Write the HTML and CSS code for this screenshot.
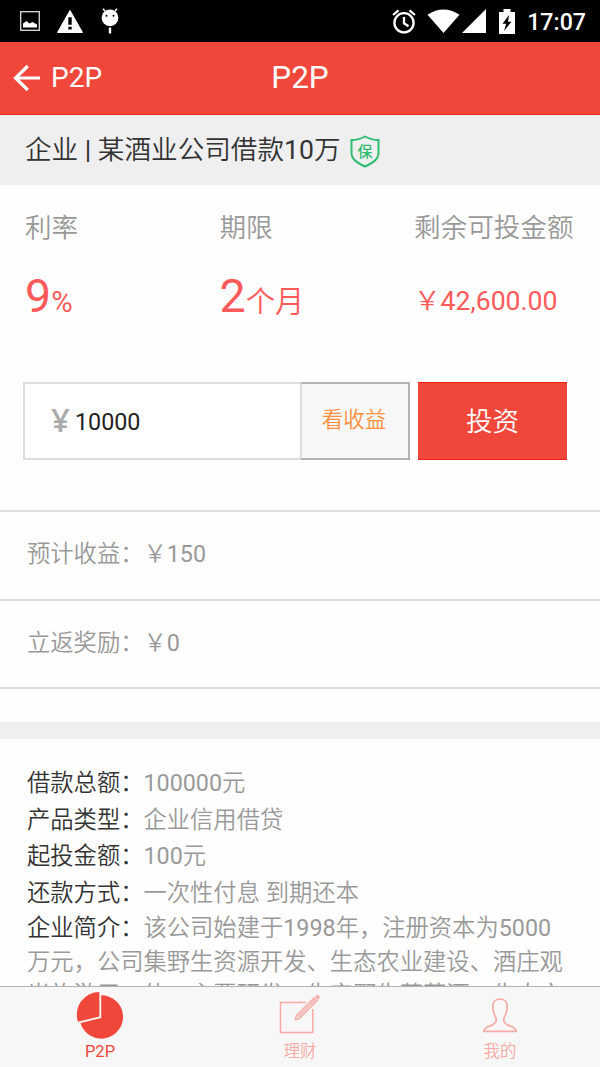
FILE: index.html
```
<!DOCTYPE html>
<html lang="zh-CN">
<head>
<meta charset="utf-8">
<title>P2P</title>
<link rel="stylesheet" href="styles.css">
</head>
<body>
<div class="app">
  <div class="status">
    <div class="status-left">
      <svg width="20" height="20" viewBox="0 0 20 20"><rect x=".7" y=".7" width="18.600" height="18.600" fill="none" stroke="#ddd" stroke-width="1.300"/><path d="M3 16.500v-4l3.500-2.500 3 2.500 3-1.500 4.500 2.500v3z" fill="#fff"/></svg>
      <svg width="26" height="23" viewBox="0 0 26 23"><path d="M13 .5 25.500 22.500H.5z" fill="#fff" stroke="#fff" stroke-linejoin="round"/><path d="M11.300 7.300h3.400v7.500h-3.400zM11.300 16.800h3.400v2.700h-3.400z" fill="#000"/></svg>
      <svg width="18" height="26" viewBox="0 0 18 26"><circle cx="9" cy="9.800" r="8.400" fill="#fff"/><path d="M4 3 2 .7M14 3 16 .7" stroke="#fff" stroke-width="1.500"/><path d="M9 19.500v6" stroke="#fff" stroke-width="2.400"/><circle cx="5.500" cy="7.800" r="1"/><circle cx="12.500" cy="7.800" r="1"/></svg>
    </div>
    <div class="status-right">
      <svg width="24" height="25" viewBox="0 0 24 25"><g fill="none" stroke="#fff" stroke-width="2.300"><circle cx="12" cy="13.800" r="9.600"/><path d="M12 8v6.300l4.500 3M1 6 6.500 1.300M23 6 17.500 1.300"/></g></svg>
      <svg width="33" height="24" viewBox="0 0 33 24"><path d="M.5 5.800Q16.500-5 32.500 5.800L16.500 24z" fill="#fff"/></svg>
      <svg class="signal" width="24" height="24" viewBox="0 0 24 24"><path d="M24 0v24H0z" fill="#fff"/></svg>
      <svg class="battery" width="16" height="25" viewBox="0 0 16 25"><path d="M4.500 0h7v3H16v22H0V3h4.500z" fill="#fff"/><path d="M10 6 3.500 14.800h3.700L5 22l7.500-9.300H9z"/></svg>
      <span class="clock">17:07</span>
    </div>
  </div>

  <header class="nav">
    <a class="back"><svg width="28" height="28" viewBox="0 0 28 28"><path d="M27 14H3M14.800 2 2.500 14l12.300 12" fill="none" stroke="#fff" stroke-width="3.200"/></svg><span>P2P</span></a>
    <h1 class="nav-title">P2P</h1>
    <span></span>
  </header>

  <main class="content">
    <div class="loan-title"><span>企业 | 某酒业公司借款10万</span>
      <svg width="30" height="33" viewBox="0 0 30 33"><path d="M15 1.500C10.500 4 6 5 1.500 5v13c0 6.500 6 10 13.500 13.500C22.500 28 28.500 24.500 28.500 18V5C24 5 19.500 4 15 1.500z" fill="none" stroke="#2fbd72" stroke-width="2"/><text class="badge-text" x="15" y="21.500">保</text></svg>
    </div>

    <section class="stats">
      <div class="stat"><div class="label">利率</div><div class="value"><span class="big">9</span><span class="percent">%</span></div></div>
      <div class="stat"><div class="label">期限</div><div class="value"><span class="big">2</span><span class="unit">个月</span></div></div>
      <div class="stat"><div class="label">剩余可投金额</div><div class="value money">￥42,600.00</div></div>
    </section>

    <section class="invest">
      <div class="amount"><span class="yen">¥</span><span class="amount-value">10000</span></div>
      <button class="calc">看收益</button>
      <button class="buy">投资</button>
    </section>

    <section class="returns">
      <div class="return-row">预计收益：<span class="sum">￥150</span></div>
      <div class="return-row">立返奖励：<span class="sum">￥0</span></div>
    </section>

    <div class="divider"></div>

    <section class="details">
      <p><b>借款总额：</b>100000元</p>
      <p><b>产品类型：</b>企业信用借贷</p>
      <p><b>起投金额：</b>100元</p>
      <p><b>还款方式：</b>一次性付息 到期还本</p>
      <p class="intro"><b>企业简介：</b>该公司始建于1998年，注册资本为5000<br>万元，公司集野生资源开发、生态农业建设、酒庄观<br>光旅游于一体，主要研发、生产野生葡萄酒、生态文</p>
    </section>
  </main>

  <nav class="tabs">
    <a class="tab active"><svg width="48" height="48" viewBox="0 0 48 48"><path d="M25.200 4.200A21.700 21.700 0 1 1 4.500 32L25.200 27z" fill="#f1473a"/><path d="M23.400 1V25.500L2 30.700A22.500 22.500 0 0 1 23.400 1z" fill="#f1473a"/></svg><span>P2P</span></a>
    <a class="tab"><svg width="48" height="48" viewBox="0 0 48 48"><g fill="none" stroke="#f8aaa4" stroke-width="1.500"><path d="M30 11.500H4.500V41.500H36.800V18"/><path d="M19.500 28.500 20.300 24.500 38.200 6.800 41 9.700 23.200 27.500zM22 25.700 39.500 8.300"/><path d="M40.300 5.500 41.500 4.600 43 6.200 42 7.500z"/></g></svg><span>理财</span></a>
    <a class="tab"><svg width="48" height="48" viewBox="0 0 48 48"><path d="M7.800 40.400c0-6.400 12.500-4.500 12.500-11.500 0-3-3.300-6.500-3.300-11.200V14c0-3.500 2.800-5.800 7-5.800s7 2.300 7 5.800v3.700c0 4.700-3.300 8.200-3.300 11.200 0 7 12.500 5.100 12.500 11.500z" fill="none" stroke="#f8aaa4" stroke-width="1.700"/></svg><span>我的</span></a>
  </nav>
</div>
</body>
</html>
```
FILE: styles.css
```
* { box-sizing: border-box; }
body { margin: 0; font-family: Roboto, "Noto Sans CJK SC DemiLight", "Noto Sans CJK SC", sans-serif; background: #fefefe; color: #333; }
svg { display: block; flex: none; }
.app { width: 600px; height: 1067px; display: flex; flex-direction: column; overflow: hidden; }

.status { height: 42px; flex: none; background: #000; color: #fff; display: flex; justify-content: space-between; padding: 0 14px 0 20px; }
.status-left, .status-right { display: flex; align-items: center; }
.status-left { gap: 17px; }
.status-left svg:nth-child(3) { margin-left: 1px; }
.status-right svg:first-child { margin-right: 11px; }
.signal { margin-left: 2px; }
.battery { margin: 0 12px 0 13px; }
.clock { font-size: 23.200px; font-weight: 500; line-height: 42px; padding-top: 1px; }

.nav { height: 73px; flex: none; background: #f1473a; border-bottom: 1px solid #ef2a1b; color: #fff; display: grid; grid-template-columns: 1fr auto 1fr; align-items: center; }
.back { display: flex; align-items: center; gap: 10px; padding-left: 13px; font-size: 28px; }
.back svg { margin-top: -1px; }
.back span { margin-top: -2px; }
.nav-title { margin: -2px 0 0; font-size: 31.500px; font-weight: 400; }

.content { flex: 1; min-height: 0; overflow: hidden; }
.loan-title { height: 70px; background: #efefef; display: flex; align-items: center; gap: 9px; padding-left: 25px; font-size: 26.600px; white-space: nowrap; }
.loan-title span { line-height: 40px; }
.loan-title svg { margin-top: 2px; }
.badge-text { font: 500 15px "Noto Sans CJK SC", sans-serif; fill: #2fbd72; text-anchor: middle; }

.stats { display: grid; grid-template-columns: 194.500px 194.500px 1fr; padding: 23px 0 0 25px; height: 197px; }
.label { font-size: 26.600px; line-height: 40px; color: #999; white-space: nowrap; }
.value { color: #ff5a5a; height: 60px; line-height: 60px; margin-top: 18px; white-space: nowrap; }
.big { font-size: 46.500px; }
.percent { font-size: 29.300px; }
.unit { font-size: 29.300px; }
.money { font-size: 26.600px; padding-top: 5px; }

.invest { display: flex; height: 78px; padding-left: 23px; }
.amount { width: 277px; border: 2px solid #ddd; border-right: 0; display: flex; align-items: center; padding-left: 26px; font-size: 23.300px; color: #222; background: #fff; }
.amount-value { padding-top: 1px; }
.yen { width: 24px; font: 600 33px/40px "Open Sans", sans-serif; color: #aaa; margin-top: -2px; }
button { font-family: inherit; padding: 0; border-radius: 0; }
.calc { width: 110px; background: #f7f7f7; border: 2px solid #b2b2b2; border-left-color: #ddd; color: #ff8f3c; font-size: 21.500px; padding: 0 2px 7px 0; }
.buy { width: 149px; margin-left: 8px; background: #f1473a; border: 0 solid #ec2213; border-width: 1px 0; color: #fff; font-size: 26.600px; padding-bottom: 4px; }

.returns { margin-top: 50px; border-top: 2px solid #ddd; color: #999; font-size: 23.300px; }
.return-row { height: 88.500px; border-bottom: 2px solid #ddd; line-height: 84px; padding-left: 27px; }
.divider { margin-top: 33px; height: 17px; background: #efefef; }

.details { padding: 26px 0 0 27px; font-size: 23.300px; color: #999; white-space: nowrap; }
.details p { margin: 0; line-height: 36.600px; }
.details b { font-weight: 400; color: #333; }
.details .intro { line-height: 33.300px; margin-top: 1px; }

.tabs { height: 81px; flex: none; background: #f7f7f7; border-top: 1px solid #b2b2b2; display: grid; grid-template-columns: repeat(3, 1fr); }
.tab { display: flex; flex-direction: column; align-items: center; padding-top: 4px; color: #f8aaa4; font-size: 16.500px; }
.tab span { line-height: 22px; margin-top: 2px; }
.active { color: #f1473a; }
```
